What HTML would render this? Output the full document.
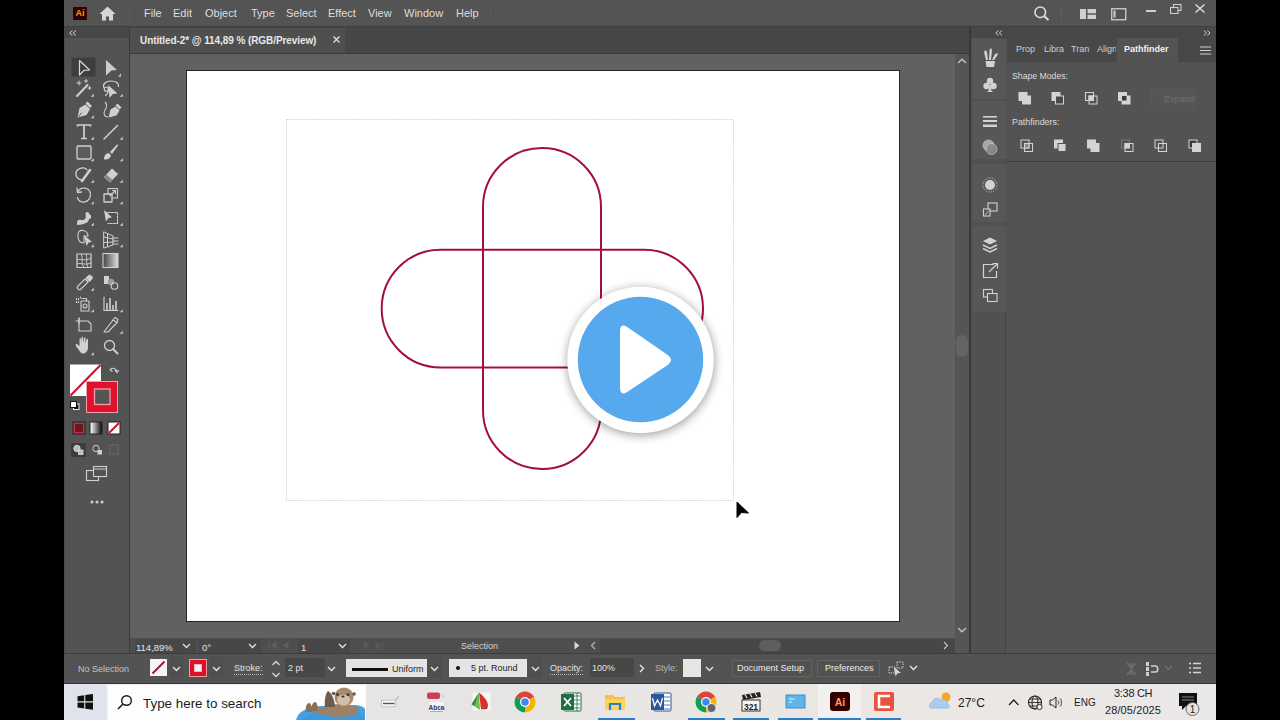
<!DOCTYPE html>
<html><head><meta charset="utf-8">
<style>
*{margin:0;padding:0;box-sizing:border-box}
html,body{width:1280px;height:720px;overflow:hidden;background:#000;font-family:"Liberation Sans",sans-serif}
.a{position:absolute}
#menubar{left:64px;top:0;width:1152px;height:27px;background:#545454}
#menubar .mi{position:absolute;top:7px;font-size:11px;color:#dedede}
#toolbar{left:64px;top:27px;width:66px;height:626px;background:#535353}
#tabbar{left:130px;top:27px;width:840px;height:27px;background:#464646}
#canvas{left:130px;top:54px;width:825px;height:584px;background:#616161}
#vscroll{left:955px;top:54px;width:14px;height:599px;background:#555555}
#status{left:130px;top:638px;width:825px;height:15px;background:#4e4e4e}
#dock{left:969px;top:27px;width:247px;height:626px;background:#535353;border-left:2px solid #383838}
#control{left:64px;top:653px;width:1152px;height:31px;background:#535353}
.c9{font-size:9px;white-space:nowrap;line-height:11px}
#taskbar{left:64px;top:684px;width:1152px;height:36px;background:#e9edf3}
</style></head><body>
<div id="menubar" class="a">
  <div class="a" style="left:9px;top:7px;width:14px;height:13px;background:#330000;border-radius:1px"></div>
  <span class="a" style="left:10px;top:7px;width:12px;font-size:9px;font-weight:bold;color:#ff9a00;text-align:center;line-height:13px">Ai</span>
  <svg class="a" style="left:35px;top:6px" width="17" height="15" viewBox="0 0 17 15"><path d="M8.5 0.5 L0.5 8 L3 8 L3 14.5 L7 14.5 L7 10.5 L10 10.5 L10 14.5 L14 14.5 L14 8 L16.5 8 Z" fill="#d6d6d6"/></svg>
  <div class="a" style="left:65px;top:4px;width:1px;height:19px;background:#5c5c5c"></div>
  <span class="mi" style="left:80px">File</span>
  <span class="mi" style="left:109px">Edit</span>
  <span class="mi" style="left:141px">Object</span>
  <span class="mi" style="left:187px">Type</span>
  <span class="mi" style="left:222px">Select</span>
  <span class="mi" style="left:264px">Effect</span>
  <span class="mi" style="left:304px">View</span>
  <span class="mi" style="left:340px">Window</span>
  <span class="mi" style="left:392px">Help</span>
  <div class="a" style="left:426px;top:4px;width:1px;height:19px;background:#5a5a5a"></div>
  <svg class="a" style="left:966px;top:4px" width="20" height="18" viewBox="0 0 20 18"><circle cx="10.3" cy="8.3" r="5.3" fill="none" stroke="#dcdcdc" stroke-width="1.6"/><path d="M14 12 L18.5 16" stroke="#dcdcdc" stroke-width="2"/></svg>
  <div class="a" style="left:997px;top:4px;width:1px;height:17px;background:#5e5e5e"></div>
  <svg class="a" style="left:1016px;top:9px" width="17" height="11" viewBox="0 0 17 11"><rect x="0" y="0" width="6" height="10" fill="#d0d0d0"/><rect x="7.5" y="0" width="8.5" height="4.3" fill="#d0d0d0"/><rect x="7.5" y="5.7" width="8.5" height="4.3" fill="#d0d0d0"/></svg>
  <svg class="a" style="left:1047px;top:8px" width="16" height="13" viewBox="0 0 16 13"><rect x="0.75" y="0.75" width="14" height="11" fill="none" stroke="#d0d0d0" stroke-width="1.3"/><rect x="2.5" y="2.5" width="2" height="7" fill="#d0d0d0"/></svg>
  <div class="a" style="left:1082px;top:10px;width:10px;height:2px;background:#d0d0d0"></div>
  <svg class="a" style="left:1106px;top:4px" width="12" height="10" viewBox="0 0 12 10"><rect x="3.5" y="0.5" width="7.5" height="6" fill="none" stroke="#d0d0d0" stroke-width="1.1"/><rect x="0.5" y="3.5" width="7.5" height="6" fill="#545454" stroke="#d0d0d0" stroke-width="1.1"/></svg>
  <svg class="a" style="left:1131px;top:4px" width="10" height="9" viewBox="0 0 10 9"><path d="M0.5 0.5 L9.5 8.5 M9.5 0.5 L0.5 8.5" stroke="#dcdcdc" stroke-width="1.4"/></svg>
  <div class="a" style="left:0;top:26px;width:1152px;height:1px;background:#3e3e3e"></div>
</div>
<div id="toolbar" class="a">
  <div class="a" style="left:0;top:0;width:65px;height:11px;background:#474747"></div>
  <div class="a" style="left:0;top:11px;width:1px;height:615px;background:#4a4a4a"></div>
  <div class="a" style="left:65px;top:0;width:1px;height:626px;background:#3a3a3a"></div>
</div>
<svg class="a" style="left:0;top:0" width="1280" height="720" viewBox="0 0 1280 720">
<g fill="none" stroke="#d2d2d2" stroke-width="1.2">
  <path d="M70 30.5 L73 33 L70 35.5 M73.5 30.5 L76.5 33 L73.5 35.5" transform="translate(145,0) scale(-1,1) translate(-1,0)" stroke-width="1"/>
</g>
<rect x="71.5" y="57.5" width="24" height="19" fill="#3e3e3e"/>
<path d="M79.5 60.5 L89.5 70 L84 70.3 L79.5 75 Z" fill="none" stroke="#dadada" stroke-width="1.2" stroke-linejoin="round"/>
<path d="M106 60 L117 70 L111.5 70.5 L106 75.5 Z" fill="#cdcdcd"/>
<path d="M118 76.5 L121 73.5 L121 76.5 Z" fill="#cdcdcd"/>
<g fill="#d0d0d0" stroke="none" transform="translate(-1.2,2.3)">
  <path d="M92 94.5 L95 91.5 L95 94.5 Z M121 94.5 L124 91.5 L124 94.5 Z M92 116 L95 113 L95 116 Z M92 137.5 L95 134.5 L95 137.5 Z M121 137.5 L124 134.5 L124 137.5 Z M92 159 L95 156 L95 159 Z M121 159 L124 156 L124 159 Z M92 180.5 L95 177.5 L95 180.5 Z M121 180.5 L124 177.5 L124 180.5 Z M92 202 L95 199 L95 202 Z M121 202 L124 199 L124 202 Z M92 223.5 L95 220.5 L95 223.5 Z M121 223.5 L124 220.5 L124 223.5 Z M92 245 L95 242 L95 245 Z M121 245 L124 242 L124 245 Z M92 288.5 L95 285.5 L95 288.5 Z M92 310 L95 307 L95 310 Z M121 310 L124 307 L124 310 Z M121 331.5 L124 328.5 L124 331.5 Z M92 353 L95 350 L95 353 Z"/>
</g>
<g fill="none" stroke="#d0d0d0" stroke-width="1.3" stroke-linecap="round" stroke-linejoin="round">
  <!-- magic wand -->
  <path d="M77 96 L87.5 85" stroke-width="2"/>
  <path d="M79 81 L79 85 M77 83 L81 83 M86 79.5 L86 82.5 M84.5 81 L87.5 81 M89.5 86.5 L89.5 89.5 M88 88 L91 88" stroke-width="1"/>
  <!-- lasso -->
  <path d="M104 88 C102 84 106 81 111 81 C116 81 119 83 118.5 86.5" stroke-width="1.2"/>
  <circle cx="106.3" cy="89.3" r="2" stroke-width="1.1"/>
  <path d="M108.2 89.5 C108.3 92 107.5 94 105.5 95.5" stroke-width="1.1"/>
  <!-- type -->
  <path d="M77.5 126.5 L77.5 125 L90.5 125 L90.5 126.5 M84 125 L84 138.5 M81 138.5 L87 138.5" stroke-width="1.7" stroke-linecap="butt"/>
  <!-- line -->
  <path d="M104 139 L117.5 125.5" stroke-width="1.5"/>
  <!-- rectangle -->
  <rect x="77" y="146" width="14" height="13" rx="1" fill="#5b5b5b" stroke-width="1.3"/>
  <!-- shaper -->
  <path d="M83 180 C76 180 74 173 78 169.5 C81.5 166.5 86 168 87 170"/>
  <path d="M82 181 L90 170" stroke-width="2.5"/>
  <!-- rotate -->
  <path d="M78 191 C81 187 88 187 90 192 C92 198 87 203 82 202 C79 201.5 77.5 199 77.5 197" stroke-dasharray="2.2 1.2"/>
  <path d="M77 188 L77.5 192.5 L81.5 192"/>
  <!-- scale -->
  <rect x="104" y="194" width="8" height="8"/>
  <path d="M108 194 L108 188.5 L117.5 188.5 L117.5 198 L112 198" stroke-width="1.1"/>
  <path d="M110 196 L115.5 190.5 M112.5 190.5 L115.5 190.5 L115.5 193.5" stroke-width="1.1"/>
  <!-- free transform -->
  <path d="M105 212.5 L117.5 212.5 L117.5 223.5 L108 223.5" stroke-dasharray="2 1.2" stroke-width="1.1"/>
  <!-- perspective -->
  <path d="M104 232 L113 236 L113 245 L104 248 Z M104 237 L113 239 M104 242.5 L113 242 M107.5 233.5 L107.5 246.5 M113 238 L118 238 M113 241 L118 241 M113 244 L118 244" stroke-width="1"/>
  <!-- mesh -->
  <rect x="77" y="254" width="14" height="13.5" stroke-width="1.2"/>
  <path d="M77 260 C81 258 85 262 91 258 M81 254 C84 258 80 263 84 267.5 M86 254 C88 257 85 262 88 267.5 M77 264 C81 262 85 266 91 263" stroke-width="0.9"/>
  <!-- eyedropper -->
  <path d="M78 289 C77 288 77 287 78 286 L85 279 L88 282 L81 289 C80 290 79 290 78 289 Z" stroke-width="1.1"/>
  <path d="M86 278 L88 276 C89 275 90.5 275 91.5 276 C92.5 277 92.5 278.5 91.5 279.5 L89.5 281.5 Z" fill="#d0d0d0" stroke-width="1"/>
  <!-- blend -->
  <rect x="104" y="276" width="5" height="8" fill="#d0d0d0" stroke="none"/>
  <circle cx="111" cy="282" r="3.2" fill="#9a9a9a" stroke="none"/>
  <circle cx="114.5" cy="286" r="3.3" stroke-width="1.1"/>
  <!-- symbol sprayer -->
  <path d="M82 298.5 L86.5 298.5 L86.5 301 M81 301 L89 301 L89 311 L81 311 Z" stroke-width="1.1"/>
  <circle cx="85" cy="306" r="2" stroke-width="1.1"/>
  <path d="M76.5 298.5 L76.5 299.5 M78.5 298.5 L78.5 299.5 M76.5 301.5 L76.5 302.5 M78.5 301.5 L78.5 302.5 M80.5 297 L80.5 298" stroke-width="1.2"/>
  <!-- column graph -->
  <path d="M104 297 L104 310.5 L118 310.5" stroke-width="1.1"/>
  <path d="M107 310 L107 303 M110 310 L110 298 M113 310 L113 305 M116 310 L116 301" stroke-width="1.6" stroke-linecap="butt"/>
  <!-- artboard -->
  <path d="M79 318 L79 331 L91 331 L91 324 L88 321 L82 321" stroke-width="1.1"/>
  <path d="M76 321 L82 321 M79 318 L79 324" stroke-width="1.1"/>
  <!-- slice -->
  <path d="M104 332 L113 320 L117 322.5 L108 332 Z" stroke-width="1.1"/>
  <path d="M113 320 L115 317.5 L118 319.5 L117 322.5" stroke-width="1.1"/>
  <!-- zoom -->
  <circle cx="109.5" cy="345.5" r="5" stroke-width="1.3"/>
  <path d="M113 349 L117.5 353.5" stroke-width="1.8"/>
</g>
<g fill="#d0d0d0" stroke="none">
  <!-- pen -->
  <path d="M77.5 117.5 L79.5 108 L85.5 104.5 L90 109 L86.5 115 Z"/>
  <path d="M85.5 103.5 L87.5 101.5 L92 106 L90 108 Z"/>
  <path d="M78.5 116.5 L82 112.5" stroke="#535353" stroke-width="1"/>
  <!-- curvature pen -->
  <path d="M108 85 L117.5 93.5 L112.8 94 L109.5 98 Z"/>
  <path d="M108.5 117.5 L110.5 109.5 L115.5 106.5 L119.5 110.5 L116.5 115.5 Z"/>
  <path d="M115.5 105.5 L117.5 103.5 L121.5 107.5 L119.5 109.5 Z"/>
  <path d="M108 117 C104 117 103 113 105 110 C107 107 107 104 105 102" fill="none" stroke="#d0d0d0" stroke-width="1.1"/>
  <!-- paintbrush -->
  <path d="M104 159.5 C104 155 106 153.5 109 153 L111 155.5 C110.5 158 108 160 104 159.5 Z"/>
  <path d="M110 152 L116.5 145 C117.5 144 118.5 144.5 118 145.5 L112 154 Z"/>
  <!-- eraser -->
  <path d="M104 177 L112 168.5 L118 174 L110 182.5 Z"/>
  <path d="M104 177 L106.5 174.5 L112.5 180 L110 182.5 Z" fill="#8a8a8a"/>
  <!-- width tool -->
  <path d="M77 222 C79 217 82 222 85 219 C87 217 84 213 87 212 C90 212 89 216 91 215 L91 218 C88 219 89 222 86 223 C83 224 81 225 77 225 Z"/>
  <!-- free transform arrow -->
  <path d="M104 210 L112 217.5 L108.5 218 L106 221.5 Z"/>
  <!-- shape builder -->
  <path d="M78 236 C77 232 80 230 83 230.5 C86 231 88 233 88 236 L84 236 L84 243 C80 243 78 240 78 236 Z" fill="none" stroke="#d0d0d0" stroke-width="1.1"/>
  <path d="M84 235 L92 242 L88.5 242.5 L86.5 246 Z"/>
  <!-- gradient -->
  <rect x="103" y="253.5" width="15" height="14" fill="url(#gr1)" stroke="#d0d0d0" stroke-width="1.1"/>
  <!-- hand -->
  <path d="M79 350 C77 348 75 345 76 344 C77 343.5 78.5 345 79.5 346 L79.5 339 C79.5 338 81 338 81 339 L81 343 L81.5 337.5 C81.5 336.5 83 336.5 83 337.5 L83 343 L84 338 C84 337 85.5 337 85.5 338 L85.5 343.5 L86.5 339.5 C86.5 338.5 88 338.5 88 339.5 L88 347 C88 351 86 353.5 83 353.5 C81 353.5 80 352 79 350 Z"/>
</g>
<defs><linearGradient id="gr1" x1="0" x2="1"><stop offset="0" stop-color="#444"/><stop offset="1" stop-color="#ddd"/></linearGradient>
<linearGradient id="gr2" x1="0" x2="1"><stop offset="0" stop-color="#fff"/><stop offset="1" stop-color="#111"/></linearGradient></defs>
<!-- fill / stroke -->
<rect x="70" y="364.5" width="31" height="31.5" fill="#fff"/>
<path d="M70.5 395.5 L100.5 365" stroke="#c4102e" stroke-width="2"/>
<rect x="86.5" y="381.5" width="31" height="31" fill="#e2102b" stroke="#f0a0a8" stroke-width="1"/>
<rect x="94.5" y="389" width="15.5" height="15.5" fill="#555" stroke="#f2a0a8" stroke-width="1.3"/>
<path d="M110.5 369 C113 367.5 116 368.5 117 371.5 M115 370 L117 372.5 L119 370 M112 368 L110 370 L112.5 371.5" fill="none" stroke="#d0d0d0" stroke-width="1.1"/>
<rect x="73.5" y="404" width="5.5" height="5.5" fill="#111" stroke="#eee" stroke-width="1"/>
<rect x="70.5" y="401.5" width="6" height="6" fill="#fff" stroke="#111" stroke-width="1"/>
<rect x="72" y="421" width="14" height="14" fill="#3a3a3a"/>
<rect x="74.5" y="423.5" width="9" height="9" fill="#6a1420" stroke="#c43040" stroke-width="1.2"/>
<rect x="89.5" y="421.5" width="13" height="13" fill="#222"/>
<rect x="90.5" y="422.5" width="11" height="11" fill="url(#gr2)"/>
<rect x="107.5" y="421.5" width="13" height="13" fill="#222"/>
<rect x="108.5" y="422.5" width="11" height="11" fill="#fff"/>
<path d="M109 433 L119 423" stroke="#c4102e" stroke-width="1.8"/>
<rect x="71" y="443" width="15" height="14" fill="#3d3d3d"/>
<circle cx="77" cy="448.5" r="3.2" fill="#bdbdbd" stroke="#ddd" stroke-width="0.8"/>
<rect x="78.5" y="450" width="4.5" height="4.5" fill="#bdbdbd" stroke="#ddd" stroke-width="0.8"/>
<circle cx="96" cy="448.5" r="3.2" fill="none" stroke="#cfcfcf" stroke-width="1"/>
<rect x="97.5" y="450" width="4.5" height="4.5" fill="#cfcfcf"/>
<rect x="110" y="445" width="8" height="9" fill="none" stroke="#6c6c6c" stroke-width="1"/>
<rect x="86.5" y="470.5" width="12" height="10" fill="none" stroke="#cfcfcf" stroke-width="1.1"/>
<rect x="93.5" y="466.5" width="13" height="10" fill="#535353" stroke="#cfcfcf" stroke-width="1.1"/>
<path d="M93.5 469 L106.5 469" stroke="#cfcfcf" stroke-width="1"/>
<circle cx="92" cy="502" r="1.5" fill="#d0d0d0"/><circle cx="97" cy="502" r="1.5" fill="#d0d0d0"/><circle cx="102" cy="502" r="1.5" fill="#d0d0d0"/>
</svg>
<div id="tabbar" class="a">
  <div class="a" style="left:0;top:1px;width:215px;height:25px;background:#4f4f4f"></div>
  <span class="a" style="left:10px;top:8px;font-size:10px;font-weight:bold;color:#e8e8e8;letter-spacing:-0.08px;white-space:nowrap">Untitled-2* @ 114,89 % (RGB/Preview)</span>
  <svg class="a" style="left:203px;top:9px" width="7" height="7" viewBox="0 0 7 7"><path d="M0.5 0.5 L6.5 6.5 M6.5 0.5 L0.5 6.5" stroke="#e0e0e0" stroke-width="1.3"/></svg>
  <div class="a" style="left:0;top:26px;width:840px;height:1px;background:#3a3a3a"></div>
</div>
<div id="canvas" class="a"></div>
<svg class="a" style="left:0;top:0" width="1280" height="720" viewBox="0 0 1280 720">
  <defs>
    <filter id="sh" x="-30%" y="-30%" width="160%" height="160%">
      <feGaussianBlur stdDeviation="5"/>
    </filter>
  </defs>
  <rect x="186.5" y="70.5" width="713" height="551" fill="#fff" stroke="#262626" stroke-width="1"/>
  <rect x="286.5" y="119.5" width="447" height="381" fill="none" stroke="#d4d4d4" stroke-width="1" stroke-dasharray="1.5 1"/>
  <rect x="483" y="148" width="118" height="321" rx="59" ry="59" fill="none" stroke="#a3113a" stroke-width="2"/>
  <rect x="381.7" y="249.8" width="321.3" height="117.6" rx="58.8" ry="58.8" fill="none" stroke="#a3113a" stroke-width="2"/>
  <circle cx="641" cy="362" r="74" fill="#000" opacity="0.35" filter="url(#sh)"/>
  <circle cx="640.5" cy="360" r="73.2" fill="#fff"/>
  <circle cx="640.5" cy="359.5" r="62.7" fill="#55a9ec"/>
  <path d="M627 328 Q621 324 621 331 L621 387.5 Q621 395 627 391 L667.5 364 Q672.5 360 667.5 356 Z" fill="#fff" stroke="#fff" stroke-width="2" stroke-linejoin="round"/>
  <path d="M737 502 L737 517.5 L741.5 512.5 L748.5 513 Z" fill="#000" stroke="#000" stroke-width="1" stroke-linejoin="round"/>
</svg>
<div id="vscroll" class="a">
  <svg class="a" style="left:2px;top:4px" width="10" height="6" viewBox="0 0 10 6"><path d="M1 5 L5 1.2 L9 5" fill="none" stroke="#c8c8c8" stroke-width="1.2"/></svg>
  <div class="a" style="left:1px;top:281px;width:12px;height:22px;background:#646464;border-radius:6px"></div>
  <svg class="a" style="left:2px;top:573px" width="10" height="6" viewBox="0 0 10 6"><path d="M1 1 L5 4.8 L9 1" fill="none" stroke="#c8c8c8" stroke-width="1.2"/></svg>
</div>
<div id="status" class="a">
  <div class="a" style="left:5px;top:1px;width:61px;height:14px;background:#474747"></div>
  <span class="a" style="left:6px;top:4px;font-size:9.5px;color:#e4e4e4">114,89%</span>
  <svg class="a" style="left:52px;top:5px" width="9" height="6" viewBox="0 0 9 6"><path d="M1 1 L4.5 4.5 L8 1" fill="none" stroke="#e0e0e0" stroke-width="1.4"/></svg>
  <div class="a" style="left:69px;top:1px;width:62px;height:14px;background:#474747"></div>
  <span class="a" style="left:72px;top:4px;font-size:9.5px;color:#e4e4e4">0°</span>
  <svg class="a" style="left:118px;top:5px" width="9" height="6" viewBox="0 0 9 6"><path d="M1 1 L4.5 4.5 L8 1" fill="none" stroke="#e0e0e0" stroke-width="1.4"/></svg>
  <svg class="a" style="left:138px;top:3px" width="24" height="9" viewBox="0 0 24 9"><path d="M1 1 L1 8 M8 1 L3.5 4.5 L8 8 Z M20 1 L15.5 4.5 L20 8 Z" fill="#5e5e5e" stroke="#5e5e5e" stroke-width="1"/></svg>
  <div class="a" style="left:168px;top:1px;width:52px;height:14px;background:#474747"></div>
  <span class="a" style="left:171px;top:4px;font-size:9.5px;color:#e4e4e4">1</span>
  <svg class="a" style="left:208px;top:5px" width="9" height="6" viewBox="0 0 9 6"><path d="M1 1 L4.5 4.5 L8 1" fill="none" stroke="#e0e0e0" stroke-width="1.4"/></svg>
  <svg class="a" style="left:230px;top:3px" width="24" height="9" viewBox="0 0 24 9"><path d="M4 1 L8.5 4.5 L4 8 Z M16 1 L20.5 4.5 L16 8 Z M23 1 L23 8" fill="#5a5a5a" stroke="#5a5a5a" stroke-width="1"/></svg>
  <span class="a" style="left:331px;top:3px;font-size:9px;color:#d4d4d4">Selection</span>
  <svg class="a" style="left:444px;top:3px" width="6" height="9" viewBox="0 0 6 9"><path d="M0.5 0.5 L5.5 4.5 L0.5 8.5 Z" fill="#d8d8d8"/></svg>
  <svg class="a" style="left:460px;top:3px" width="6" height="9" viewBox="0 0 6 9"><path d="M5 1 L1.5 4.5 L5 8" fill="none" stroke="#bcbcbc" stroke-width="1.1"/></svg>
  <div class="a" style="left:470px;top:1px;width:355px;height:14px;background:#474747"></div>
  <div class="a" style="left:629px;top:2px;width:22px;height:11px;background:#5e5e5e;border-radius:6px"></div>
  <svg class="a" style="left:813px;top:3px" width="6" height="9" viewBox="0 0 6 9"><path d="M1 1 L4.5 4.5 L1 8" fill="none" stroke="#c8c8c8" stroke-width="1.1"/></svg>
</div>
<div id="dock" class="a">
  <div class="a" style="left:0;top:0;width:245px;height:11px;background:#474747"></div>
  <svg class="a" style="left:24px;top:3px" width="8" height="6" viewBox="0 0 8 6"><path d="M3.5 0.5 L0.8 3 L3.5 5.5 M7 0.5 L4.3 3 L7 5.5" fill="none" stroke="#d0d0d0" stroke-width="1"/></svg>
  <svg class="a" style="left:232px;top:3px" width="8" height="6" viewBox="0 0 8 6"><path d="M0.8 0.5 L3.5 3 L0.8 5.5 M4.3 0.5 L7 3 L4.3 5.5" fill="none" stroke="#d0d0d0" stroke-width="1"/></svg>
  <div class="a" style="left:0;top:11px;width:35px;height:615px;background:#515151;border-right:1px solid #434343"></div>
  <div class="a" style="left:1px;top:12px;width:34px;height:60px;background:#575757"></div>
  <div class="a" style="left:1px;top:74px;width:34px;height:58px;background:#575757"></div>
  <div class="a" style="left:1px;top:137px;width:34px;height:58px;background:#575757"></div>
  <div class="a" style="left:1px;top:199px;width:34px;height:86px;background:#575757"></div>
  <div class="a" style="left:36px;top:11px;width:209px;height:24px;background:#484848"></div>
  <div class="a" style="left:146px;top:11px;width:61px;height:24px;background:#535353"></div>
  <span class="a c9" style="left:45px;top:17px;color:#cfcfcf">Prop</span>
  <span class="a c9" style="left:73px;top:17px;color:#cfcfcf;width:24px;overflow:hidden">Libra</span>
  <span class="a c9" style="left:100px;top:17px;color:#cfcfcf;width:22px;overflow:hidden">Tran</span>
  <span class="a c9" style="left:126px;top:17px;color:#cfcfcf;width:19px;overflow:hidden">Align</span>
  <span class="a c9" style="left:153px;top:17px;color:#f2f2f2;font-weight:bold">Pathfinder</span>
  <svg class="a" style="left:229px;top:19px" width="11" height="9" viewBox="0 0 11 9"><path d="M0 1 L11 1 M0 4.5 L11 4.5 M0 8 L11 8" stroke="#cfcfcf" stroke-width="1.1"/></svg>
  <span class="a c9" style="left:41px;top:44px;color:#dadada;font-size:8.7px">Shape Modes:</span>
  <span class="a c9" style="left:41px;top:90px;color:#dadada;font-size:8.9px">Pathfinders:</span>
  <div class="a" style="left:180px;top:62px;width:45px;height:21px;background:#555;border:1px solid #585858"></div>
  <span class="a c9" style="left:193px;top:67px;color:#707070">Expand</span>
  <div class="a" style="left:36px;top:134px;width:209px;height:1px;background:#3e3e3e"></div>
</div>
<svg class="a" style="left:0;top:0" width="1280" height="720" viewBox="0 0 1280 720">
<g fill="#d2d2d2">
  <!-- libraries brushes -->
  <path d="M985.5 61 L995 61 L994 67 L986.5 67 Z"/>
  <path d="M986 60 L984 52 L985.5 50 L987 52 L988 60 Z M989 60 L989.5 50 L991 48 L992 50 L991 60 Z M992 60 L995 54 L998 53 L997 56 L994 60 Z"/>
  <!-- club -->
  <circle cx="990" cy="81" r="3.2"/><circle cx="986.5" cy="86" r="3.2"/><circle cx="993.5" cy="86" r="3.2"/>
  <path d="M989.3 85 L990.7 85 L991.5 91 L993.5 92 L986.5 92 L988.5 91 Z"/>
  <!-- stroke lines -->
  <rect x="983" y="116" width="14" height="1.6"/><rect x="983" y="120" width="14" height="2"/><rect x="983" y="124.5" width="14" height="2.5"/>
  <!-- sun -->
  <circle cx="990" cy="185" r="5"/>
</g>
<g fill="none" stroke="#d2d2d2">
  <circle cx="988.5" cy="145.5" r="5.5" fill="#a8a8a8" stroke="#bdbdbd" stroke-width="0.8"/>
  <circle cx="991.5" cy="149" r="5.5" fill="#8a8a8a" stroke="#c8c8c8" stroke-width="0.8" opacity="0.9"/>
  <circle cx="990" cy="185" r="7" stroke-width="1" stroke-dasharray="1 1.3"/>
  <rect x="988" y="203" width="9" height="8" stroke-width="1.1"/>
  <rect x="983.5" y="209" width="6.5" height="7" fill="#535353" stroke-width="1.1"/>
  <path d="M985 215 L989 210.5" stroke-width="0.9"/>
  <path d="M983 241 L990 237.5 L997 241 L990 244.5 Z" fill="#d2d2d2" stroke="none"/>
  <path d="M983 245 L990 248.5 L997 245 M983 248.5 L990 252 L997 248.5" stroke-width="1.4"/>
  <path d="M994 264.5 L983.5 264.5 L983.5 277.5 L996.5 277.5 L996.5 271" stroke-width="1.2"/>
  <path d="M989 272 L997 264 M992.5 263.5 L997.5 263.5 L997.5 268.5" stroke-width="1.2"/>
  <rect x="983.5" y="289.5" width="9" height="7.5" stroke-width="1.1"/>
  <rect x="987.5" y="293.5" width="9.5" height="8" fill="#575757" stroke-width="1.1"/>
</g>
<!-- shape modes -->
<g stroke="#d4d4d4" stroke-width="1">
  <rect x="1019" y="92.5" width="8" height="8" fill="#d4d4d4"/><rect x="1022.5" y="96" width="8" height="8" fill="#d4d4d4"/>
  <rect x="1052" y="92.5" width="8" height="8" fill="#d4d4d4"/><rect x="1055.5" y="96" width="8" height="8" fill="#4a4a4a"/>
  <rect x="1085.5" y="92.5" width="8" height="8" fill="none"/><rect x="1089" y="96" width="8" height="8" fill="none"/><rect x="1089" y="96" width="4.5" height="4.5" fill="#d4d4d4"/>
  <rect x="1118.5" y="92.5" width="8" height="8" fill="#d4d4d4"/><rect x="1122" y="96" width="8" height="8" fill="#d4d4d4"/><rect x="1122" y="96" width="4.5" height="4.5" fill="#3a3a3a" stroke="none"/>
</g>
<g stroke="#d4d4d4" stroke-width="1">
  <rect x="1021" y="140" width="8" height="8" fill="none"/><rect x="1024.5" y="143.5" width="8" height="8" fill="none"/><rect x="1024.5" y="143.5" width="4.5" height="4.5" fill="#888"/>
  <rect x="1054.5" y="140" width="8" height="8" fill="#d4d4d4"/><rect x="1058" y="143.5" width="8" height="8" fill="#d4d4d4" stroke="#535353"/>
  <rect x="1087.5" y="140" width="8" height="8" fill="#d4d4d4"/><rect x="1091" y="143.5" width="8" height="8" fill="#d4d4d4"/>
  <rect x="1121.5" y="140" width="8" height="8" fill="none" stroke="#777"/><rect x="1125" y="143.5" width="8" height="8" fill="none"/><rect x="1125" y="143.5" width="4.5" height="4.5" fill="#d4d4d4"/>
  <rect x="1155" y="140" width="8" height="8" fill="none"/><rect x="1158.5" y="143.5" width="8" height="8" fill="none"/>
  <rect x="1189" y="140" width="8" height="8" fill="#3e3e3e"/><rect x="1192.5" y="143.5" width="8" height="8" fill="#d4d4d4"/>
</g>
</svg>
<div id="control" class="a">
  <div class="a" style="left:0;top:0;width:1152px;height:1px;background:#3c3c3c"></div>
  <div class="a" style="left:0;top:30px;width:1152px;height:1px;background:#363636"></div>
  <span class="a c9" style="left:14px;top:11px;color:#c4c4c4">No Selection</span>
  <div class="a" style="left:86px;top:6px;width:17px;height:17px;background:#f4f4f4"></div>
  <svg class="a" style="left:86px;top:6px" width="17" height="17" viewBox="0 0 17 17"><path d="M2.5 14.5 L14.5 2.5" stroke="#a0102a" stroke-width="1.8"/></svg>
  <div class="a" style="left:106px;top:4px;width:13px;height:21px;background:#4f4f4f"></div>
  <svg class="a chev" style="left:108px;top:13px" width="9" height="6" viewBox="0 0 9 6"><path d="M1 1 L4.5 4.5 L8 1" fill="none" stroke="#e6e6e6" stroke-width="1.4"/></svg>
  <div class="a" style="left:125px;top:6px;width:18px;height:18px;background:#dc1028;border:1px solid #f09aa4"></div>
  <div class="a" style="left:131px;top:12px;width:6px;height:6px;background:#f2f2f2;outline:1px solid #f6b0b8"></div>
  <div class="a" style="left:146px;top:4px;width:13px;height:21px;background:#4f4f4f"></div>
  <svg class="a" style="left:148px;top:13px" width="9" height="6" viewBox="0 0 9 6"><path d="M1 1 L4.5 4.5 L8 1" fill="none" stroke="#e6e6e6" stroke-width="1.4"/></svg>
  <span class="a c9" style="left:170px;top:10px;color:#e2e2e2">Stroke:</span>
  <div class="a" style="left:170px;top:21px;width:29px;height:0;border-top:1px dotted #bdbdbd"></div>
  <svg class="a" style="left:207px;top:7px" width="10" height="18" viewBox="0 0 10 18"><path d="M1.5 5 L5 1.5 L8.5 5 M1.5 13 L5 16.5 L8.5 13" fill="none" stroke="#d8d8d8" stroke-width="1.3"/></svg>
  <div class="a" style="left:221px;top:5px;width:40px;height:19px;background:#474747"></div>
  <span class="a c9" style="left:224px;top:10px;color:#e2e2e2">2 pt</span>
  <svg class="a" style="left:263px;top:13px" width="9" height="6" viewBox="0 0 9 6"><path d="M1 1 L4.5 4.5 L8 1" fill="none" stroke="#e6e6e6" stroke-width="1.4"/></svg>
  <div class="a" style="left:282px;top:6px;width:81px;height:18px;background:#e4e4e4"></div>
  <div class="a" style="left:288px;top:15px;width:36px;height:2.5px;background:#111"></div>
  <span class="a c9" style="left:328px;top:11px;color:#1e1e1e">Uniform</span>
  <div class="a" style="left:364px;top:4px;width:14px;height:21px;background:#4f4f4f"></div>
  <svg class="a" style="left:366px;top:13px" width="9" height="6" viewBox="0 0 9 6"><path d="M1 1 L4.5 4.5 L8 1" fill="none" stroke="#e6e6e6" stroke-width="1.4"/></svg>
  <div class="a" style="left:385px;top:6px;width:78px;height:18px;background:#e4e4e4"></div>
  <div class="a" style="left:392px;top:13px;width:4px;height:4px;border-radius:50%;background:#111"></div>
  <span class="a c9" style="left:407px;top:10px;color:#1e1e1e">5 pt. Round</span>
  <div class="a" style="left:464px;top:4px;width:14px;height:21px;background:#4f4f4f"></div>
  <svg class="a" style="left:467px;top:13px" width="9" height="6" viewBox="0 0 9 6"><path d="M1 1 L4.5 4.5 L8 1" fill="none" stroke="#e6e6e6" stroke-width="1.4"/></svg>
  <span class="a c9" style="left:486px;top:10px;color:#e2e2e2">Opacity:</span>
  <div class="a" style="left:486px;top:21px;width:33px;height:0;border-top:1px dotted #bdbdbd"></div>
  <div class="a" style="left:526px;top:5px;width:44px;height:19px;background:#474747"></div>
  <span class="a c9" style="left:528px;top:10px;color:#e2e2e2">100%</span>
  <svg class="a" style="left:575px;top:11px" width="6" height="9" viewBox="0 0 6 9"><path d="M1 1 L4.5 4.5 L1 8" fill="none" stroke="#e6e6e6" stroke-width="1.4"/></svg>
  <span class="a c9" style="left:591px;top:10px;color:#b8b8b8">Style:</span>
  <div class="a" style="left:619px;top:6px;width:18px;height:18px;background:#e6e6e6"></div>
  <svg class="a" style="left:641px;top:13px" width="9" height="6" viewBox="0 0 9 6"><path d="M1 1 L4.5 4.5 L8 1" fill="none" stroke="#e6e6e6" stroke-width="1.4"/></svg>
  <div class="a" style="left:668px;top:7px;width:80px;height:17px;border:1px solid #626262;background:#515151"></div>
  <span class="a c9" style="left:673px;top:10px;color:#ececec">Document Setup</span>
  <div class="a" style="left:753px;top:7px;width:63px;height:17px;border:1px solid #626262;background:#515151"></div>
  <span class="a c9" style="left:761px;top:10px;color:#ececec">Preferences</span>
  <svg class="a" style="left:824px;top:8px" width="16" height="16" viewBox="0 0 16 16"><rect x="1" y="6" width="6" height="6" fill="none" stroke="#cfcfcf" stroke-width="1" stroke-dasharray="1.5 1"/><rect x="9" y="1" width="6" height="6" fill="none" stroke="#cfcfcf" stroke-width="1" stroke-dasharray="1.5 1"/><path d="M6 6 L13 12 L9.5 12.3 L7.5 15.5 Z" fill="#d8d8d8"/></svg>
  <svg class="a" style="left:845px;top:12px" width="9" height="6" viewBox="0 0 9 6"><path d="M1 1 L4.5 4.5 L8 1" fill="none" stroke="#e6e6e6" stroke-width="1.4"/></svg>
  <svg class="a" style="left:1061px;top:9px" width="13" height="14" viewBox="0 0 13 14"><path d="M2 1 L6.5 6 L11 1 M2 13 L6.5 8 L11 13 M6.5 1 L6.5 13" fill="none" stroke="#6a6a6a" stroke-width="2"/></svg>
  <svg class="a" style="left:1081px;top:8px" width="16" height="16" viewBox="0 0 16 16"><rect x="1" y="1" width="3" height="14" fill="#d0d0d0"/><path d="M1 5.5 L4 5.5 M1 10.5 L4 10.5" stroke="#535353" stroke-width="1"/><path d="M6 5 L10.5 5 C13.5 5 13.5 11 10.5 11 L6 11" fill="none" stroke="#d0d0d0" stroke-width="1.6"/></svg>
  <svg class="a" style="left:1100px;top:12px" width="9" height="6" viewBox="0 0 9 6"><path d="M1 1 L4.5 4.5 L8 1" fill="none" stroke="#777" stroke-width="1.1"/></svg>
  <svg class="a" style="left:1125px;top:9px" width="12" height="12" viewBox="0 0 12 12"><path d="M0 1.5 L2 1.5 M4 1.5 L12 1.5 M0 6 L2 6 M4 6 L12 6 M0 10.5 L2 10.5 M4 10.5 L12 10.5" stroke="#d4d4d4" stroke-width="1.6"/></svg>
</div>
<div id="taskbar" class="a">
  <div class="a" style="left:0;top:0;width:42px;height:36px;background:#dfe4ec"></div>
  <svg class="a" style="left:13px;top:10px" width="17" height="16" viewBox="0 0 17 16"><path d="M0.5 2.3 L7.2 1.3 L7.2 7.3 L0.5 7.3 Z M8.3 1.1 L16 0 L16 7.3 L8.3 7.3 Z M0.5 8.4 L7.2 8.4 L7.2 14.6 L0.5 13.6 Z M8.3 8.4 L16 8.4 L16 15.8 L8.3 14.8 Z" fill="#111"/></svg>
  <div class="a" style="left:44px;top:1px;width:258px;height:35px;background:#fdfdfd"></div>
  <svg class="a" style="left:53px;top:10px" width="16" height="16" viewBox="0 0 16 16"><circle cx="9.5" cy="6.5" r="4.8" fill="none" stroke="#1a1a1a" stroke-width="1.4"/><path d="M6 10 L1 15" stroke="#1a1a1a" stroke-width="1.6"/></svg>
  <span class="a" style="left:79px;top:12px;font-size:13.4px;color:#1c1c1c;white-space:nowrap">Type here to search</span>
  <svg class="a" style="left:226px;top:0px" width="76" height="36" viewBox="290 684 76 36">
    <path d="M296 720 C298 712 306 707 322 706 L352 705 C360 705 365 707 365 710 L365 720 Z" fill="#45a0e4"/>
    <path d="M302 720 C305 715 312 712 325 711 L355 711 C361 712 364 715 364 720 Z" fill="#3a92d8" opacity="0.6"/>
    <ellipse cx="340" cy="710.5" rx="19" ry="6.5" fill="#9c8166"/>
    <path d="M322 715 C318 713 315 712 312 712 L314 706 C318 706 322 708 326 709 Z" fill="#9c8166"/>
    <path d="M306 712 C305 707 307 703 309 703 C311 703 312 707 312 712 Z M311 711 C311 706 313 702 315 702 C317 702 318 706 317 711 Z" fill="#8a7058"/>
    <path d="M325 707 C324 700 326 692 328 691 C331 692 335 700 335 707 Z" fill="#6f5b4a"/>
    <circle cx="344" cy="697" r="9.5" fill="#a58a6e"/>
    <ellipse cx="343.5" cy="700" rx="6.5" ry="5.5" fill="#d2bfa6"/>
    <circle cx="337.5" cy="694.5" r="1.5" fill="#4a3a2a"/><circle cx="348" cy="694.5" r="1.5" fill="#4a3a2a"/>
    <ellipse cx="343" cy="696.5" rx="1.6" ry="1.1" fill="#3a2a1a"/>
    <circle cx="333.5" cy="693.5" r="1.8" fill="#6f5b4a"/><circle cx="354" cy="694" r="1.8" fill="#6f5b4a"/>
  </svg>
  <div class="a" style="left:302px;top:0;width:850px;height:36px;background:linear-gradient(90deg,#e6e5e4 0%,#e9e6e2 40%,#ece7e2 70%,#eae8e8 100%)"></div>
</div>
<svg class="a" style="left:0;top:0" width="1280" height="720" viewBox="0 0 1280 720">
  <!-- icon1 -->
  <path d="M381.5 700.5 L395.5 700 L395.5 706.5 L381.5 707 Z" fill="#f7f7f7" stroke="#b8b8b8" stroke-width="0.8"/>
  <path d="M383 703.5 L394.5 703.5" stroke="#555" stroke-width="1.4"/>
  <path d="M395.5 700 L399 696" stroke="#9a9a9a" stroke-width="0.8"/>
  <!-- icon2 -->
  <rect x="427" y="692.5" width="13" height="6.5" rx="2" fill="#c8405a"/>
  <path d="M440.5 694 L444 697" stroke="#aaa" stroke-width="0.8"/>
  <rect x="429" y="702" width="15" height="10" fill="#f4f4f6"/>
  <text x="436.5" y="709.5" font-family="Liberation Sans" font-size="6.5" font-weight="bold" text-anchor="middle" fill="#334">Abca</text>
  <path d="M430 711.5 L443 711.5" stroke="#7a9ad8" stroke-width="0.8"/>
  <!-- icon3 -->
  <rect x="472" y="692" width="19" height="19" fill="#f8f6f6" stroke="#e2dcdc" stroke-width="0.6"/>
  <path d="M479 692.5 C476 697 473 701 471.5 704.5 L475 706.5 Z" fill="#2f9a2f"/>
  <path d="M479 692.5 L475 706.5 L480 710 Z" fill="#6ab04a" opacity="0.9"/>
  <path d="M479 692.5 C485 697 488 702 488 706 L481 709.5 Z" fill="#d8332a"/>
  <path d="M481 709.5 L488 706 L487 709 Z" fill="#b22020"/>
  <!-- chrome -->
  <path d="M525 702 L515.91 696.75 A10.5 10.5 0 0 1 534.09 696.75 Z" fill="#db4437"/><path d="M525 702 L534.09 696.75 A10.5 10.5 0 0 1 525.00 712.50 Z" fill="#f4b400"/><path d="M525 702 L525.00 712.50 A10.5 10.5 0 0 1 515.91 696.75 Z" fill="#0f9d58"/><circle cx="525" cy="702" r="5" fill="#fff"/><circle cx="525" cy="702" r="3.8" fill="#4285f4"/>
  <!-- excel -->
  <rect x="564" y="693" width="17" height="18" rx="1" fill="#fff" stroke="#1e6e42" stroke-width="1"/>
  <path d="M574 696 L580 696 M574 700 L580 700 M574 704 L580 704 M574 708 L580 708 M577 693 L577 711" stroke="#1e6e42" stroke-width="0.8"/>
  <rect x="561" y="694" width="13" height="16" fill="#1d6f42"/>
  <path d="M564 698 L571 706 M571 698 L564 706" stroke="#fff" stroke-width="1.8"/>
  <!-- explorer -->
  <path d="M605 695 L613 695 L615 697 L625 697 L625 710 L605 710 Z" fill="#f3c342"/>
  <rect x="605" y="699" width="20" height="11" fill="#f8d55c"/>
  <path d="M610 710 L610 704 L620 704 L620 710" fill="none" stroke="#2b7fc8" stroke-width="2.2"/>
  <rect x="598" y="718" width="37" height="2" fill="#2b7fc8"/>
  <!-- word -->
  <rect x="654" y="693" width="17" height="18" rx="1" fill="#fff" stroke="#2b579a" stroke-width="1"/>
  <path d="M664 697 L670 697 M664 701 L670 701 M664 705 L670 705 M664 709 L670 709" stroke="#2b579a" stroke-width="0.8"/>
  <rect x="651" y="694" width="13" height="16" fill="#2b579a"/>
  <path d="M652.5 698 L654.5 706 L657.5 700 L660.5 706 L662.5 698" fill="none" stroke="#fff" stroke-width="1.3"/>
  <!-- chrome2 -->
  <path d="M706 702 L696.91 696.75 A10.5 10.5 0 0 1 715.09 696.75 Z" fill="#db4437"/><path d="M706 702 L715.09 696.75 A10.5 10.5 0 0 1 706.00 712.50 Z" fill="#f4b400"/><path d="M706 702 L706.00 712.50 A10.5 10.5 0 0 1 696.91 696.75 Z" fill="#0f9d58"/><circle cx="706" cy="702" r="5" fill="#fff"/><circle cx="706" cy="702" r="3.8" fill="#4285f4"/>
  <circle cx="711.5" cy="708" r="4.5" fill="#5d6770" stroke="#eee" stroke-width="1"/>
  <rect x="688" y="718" width="37" height="2" fill="#2b7fc8"/>
  <!-- 321 -->
  <path d="M742 695 L760 692 L761 697 L743 700 Z" fill="#222"/>
  <path d="M745 694.5 L747 698 M750 693.8 L752 697.3 M755 693 L757 696.5" stroke="#eee" stroke-width="1.2"/>
  <rect x="742" y="700" width="18" height="11" fill="#f5f5f5" stroke="#333" stroke-width="1"/>
  <text x="751" y="709.5" font-family="Liberation Sans" font-size="8.5" font-weight="bold" text-anchor="middle" fill="#222">321</text>
  <rect x="733" y="718" width="36" height="2" fill="#2b7fc8"/>
  <!-- blue screen -->
  <rect x="786" y="695" width="19" height="13" fill="#5fb4e8" stroke="#3b8fd0" stroke-width="1"/>
  <path d="M789 699 L795 699 M789 702 L792 702" stroke="#e8f4ff" stroke-width="1.2"/>
  <rect x="778" y="718" width="35" height="2" fill="#2b7fc8"/>
  <!-- ai active -->
  <rect x="818" y="684" width="43" height="36" fill="#f2f1f0"/>
  <rect x="830" y="692" width="20" height="19" rx="3" fill="#330000"/>
  <text x="840" y="706" font-family="Liberation Sans" font-size="10.5" font-weight="bold" text-anchor="middle" fill="#ff9d55">Ai</text>
  <rect x="818" y="718" width="43" height="2" fill="#2b7fc8"/>
  <!-- camtasia -->
  <rect x="874" y="692" width="20" height="19" rx="2" fill="#e8533f"/>
  <path d="M890 696 L879 696 L879 707 L890 707" fill="none" stroke="#fff" stroke-width="2.6"/>
  <rect x="866" y="718" width="35" height="2" fill="#2b7fc8"/>
  <!-- weather -->
  <circle cx="946" cy="697" r="4.5" fill="#f5a623"/>
  <path d="M931 708 C929 708 929 703 932 702.5 C933 698 938 697 940.5 700 C943 698 948 700 947.5 704 C950 704.5 950 708 947.5 708 Z" fill="#aacdee" stroke="#8fb6df" stroke-width="0.8"/>
  <!-- tray -->
  <path d="M1009 705 L1013.75 700 L1018.5 705" fill="none" stroke="#222" stroke-width="1.3"/>
  <circle cx="1035" cy="702.5" r="6.5" fill="none" stroke="#222" stroke-width="1.1"/>
  <ellipse cx="1035" cy="702.5" rx="3" ry="6.5" fill="none" stroke="#222" stroke-width="1"/>
  <path d="M1028.5 702.5 L1041.5 702.5 M1029.5 699 L1040.5 699 M1029.5 706 L1040.5 706" stroke="#222" stroke-width="0.9"/>
  <circle cx="1039.5" cy="707" r="2.6" fill="#eee" stroke="#222" stroke-width="0.9"/>
  <path d="M1050 700 L1052.5 700 L1056 697 L1056 708 L1052.5 705 L1050 705 Z" fill="none" stroke="#222" stroke-width="1"/>
  <path d="M1058 700.5 C1059 701.5 1059 703.5 1058 704.5 M1060 698.5 C1062 700.5 1062 704.5 1060 706.5" fill="none" stroke="#222" stroke-width="0.9"/>
  <!-- notif -->
  <path d="M1179 693 L1197 693 L1197 706 L1186 706 L1182 710 L1182 706 L1179 706 Z" fill="#111"/>
  <path d="M1182 697 L1194 697 M1182 700 L1194 700" stroke="#888" stroke-width="1"/>
  <circle cx="1192.5" cy="709" r="6.5" fill="#e4e4e4" stroke="#666" stroke-width="1"/>
  <text x="1192.5" y="713" font-family="Liberation Sans" font-size="10" text-anchor="middle" fill="#222">1</text>
</svg>
<span class="a" style="left:958px;top:696px;font-size:12px;color:#1c1c1c">27°C</span>
<span class="a" style="left:1074px;top:697px;font-size:10px;color:#1c1c1c">ENG</span>
<span class="a" style="left:1114px;top:687px;font-size:11px;color:#1c1c1c;letter-spacing:-0.3px;white-space:nowrap">3:38 CH</span>
<span class="a" style="left:1105px;top:704px;font-size:11px;color:#1c1c1c;letter-spacing:0.1px;white-space:nowrap">28/05/2025</span>
</body></html>
